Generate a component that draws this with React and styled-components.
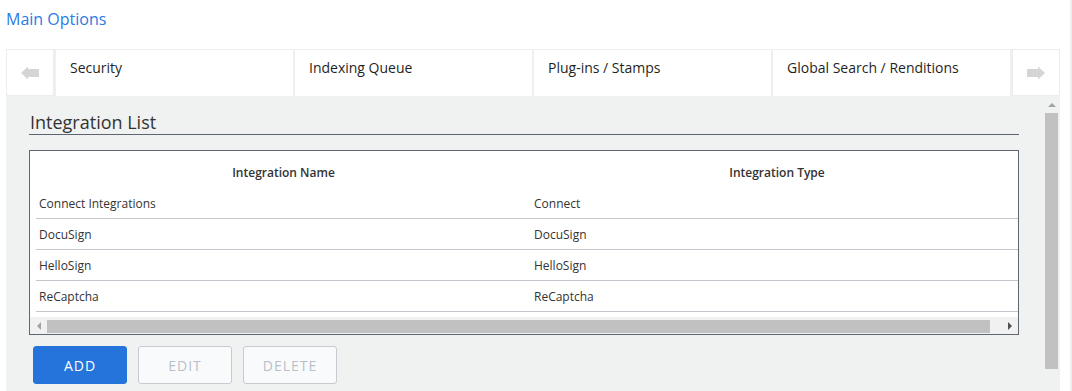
import React from "react";
import styled, { createGlobalStyle } from "styled-components";

const GlobalStyle = createGlobalStyle`
  html, body {
    margin: 0;
    padding: 0;
    background: #ffffff;
    overflow: hidden;
  }
  body {
    font-family: "Open Sans", "Liberation Sans", sans-serif;
  }
  * {
    box-sizing: border-box;
  }
`;

const integrations = [
  { name: "Connect Integrations", type: "Connect" },
  { name: "DocuSign", type: "DocuSign" },
  { name: "HelloSign", type: "HelloSign" },
  { name: "ReCaptcha", type: "ReCaptcha" },
];

const tabs = ["Security", "Indexing Queue", "Plug-ins / Stamps", "Global Search / Renditions"];

const Arrow = ({ flip }) => (
  <svg width="18" height="14" viewBox="0 0 18 14" style={flip ? { transform: "scaleX(-1)" } : null}>
    <path d="M0 7 L7 0.5 L7 3 L18 3 L18 11 L7 11 L7 13.5 Z" fill="#d5d5d5" />
  </svg>
);

const App = () => {
  return (
    <>
      <GlobalStyle />
      <Page>
        <Title>Main Options</Title>
        <TabBar>
          <ArrowBox>
            <Arrow />
          </ArrowBox>
          <Tabs>
            {tabs.map((tab) => (
              <Tab key={tab}>{tab}</Tab>
            ))}
          </Tabs>
          <ArrowBox>
            <Arrow flip />
          </ArrowBox>
        </TabBar>
        <Panel>
          <Content>
            <SectionTitle>Integration List</SectionTitle>
            <TableBox>
              <TableView>
                <HeaderRow>
                  <HeadCell>Integration Name</HeadCell>
                  <HeadCell>Integration Type</HeadCell>
                </HeaderRow>
                {integrations.map((item) => (
                  <Row key={item.name}>
                    <Cell>{item.name}</Cell>
                    <Cell>{item.type}</Cell>
                  </Row>
                ))}
              </TableView>
              <HScroll>
                <ScrollButton>
                  <Triangle dir="left" $color="#a3a3a3" />
                </ScrollButton>
                <HThumb />
                <HGap />
                <ScrollButton>
                  <Triangle dir="right" $color="#505050" />
                </ScrollButton>
              </HScroll>
            </TableBox>
            <Buttons>
              <Button $primary>ADD</Button>
              <Button disabled>EDIT</Button>
              <Button disabled>DELETE</Button>
            </Buttons>
          </Content>
          <VScroll>
            <ScrollButton>
              <Triangle dir="up" $color="#a3a3a3" />
            </ScrollButton>
            <VThumb />
          </VScroll>
        </Panel>
      </Page>
    </>
  );
};

const Page = styled.div`
  width: 1072px;
  height: 391px;
  padding: 8px 10px 0 6px;
  border-right: 2px solid #efefef;
  overflow: hidden;
`;

const Title = styled.div`
  font-size: 16px;
  line-height: 22px;
  color: #2b7be4;
  margin-bottom: 19px;
`;

const TabBar = styled.div`
  display: flex;
  align-items: flex-start;
`;

const ArrowBox = styled.div`
  width: 48px;
  height: 47px;
  flex-shrink: 0;
  border: 1px solid #ececec;
  display: flex;
  align-items: center;
  justify-content: center;
  background: #ffffff;
`;

const Tabs = styled.div`
  flex: 1;
  min-width: 0;
  display: flex;
  border-top: 1px solid #f0f0f0;
  border-right: 2px solid #efefef;
`;

const Tab = styled.div`
  flex: 1;
  min-width: 0;
  height: 46px;
  padding: 8px 0 0 14px;
  border-left: 2px solid #efefef;
  font-size: 14px;
  line-height: 20px;
  color: #1f1f1f;
  background: #ffffff;
  white-space: nowrap;
  overflow: hidden;
`;

const Panel = styled.div`
  display: flex;
  background: #f0f1f1;
  height: 300px;
`;

const Content = styled.div`
  flex: 1;
  min-width: 0;
  padding: 14px 24px 0 23px;
`;

const SectionTitle = styled.div`
  font-size: 18px;
  line-height: 24px;
  color: #333333;
  padding-left: 1px;
  border-bottom: 1px solid #5d6571;
  margin-bottom: 15px;
`;

const TableBox = styled.div`
  border: 1px solid #5f6670;
  background: #ffffff;
  overflow: hidden;
`;

const TableView = styled.div`
  width: 994px;
  margin-left: 6px;
  padding-bottom: 5px;
`;

const HeaderRow = styled.div`
  display: grid;
  grid-template-columns: 495px 492px;
  padding: 14px 0 7px;
`;

const HeadCell = styled.div`
  font-size: 12px;
  line-height: 16px;
  font-weight: 600;
  color: #333333;
  text-align: center;
`;

const Row = styled.div`
  display: grid;
  grid-template-columns: 495px 492px;
  height: 31px;
  align-items: center;
  border-bottom: 1px solid #c3c7cd;
`;

const Cell = styled.div`
  font-size: 12px;
  line-height: 16px;
  color: #333333;
  padding-left: 3px;
  padding-top: 1px;
`;

const HScroll = styled.div`
  display: flex;
  height: 17px;
  background: #f1f1f1;
`;

const ScrollButton = styled.div`
  width: 17px;
  height: 17px;
  flex-shrink: 0;
  display: flex;
  align-items: center;
  justify-content: center;
`;

const Triangle = styled.div`
  width: 0;
  height: 0;
  border-style: solid;
  border-color: transparent;
  ${({ dir, $color }) =>
    dir === "left"
      ? `border-width: 4px 4px 4px 0; border-right-color: ${$color};`
      : dir === "right"
      ? `border-width: 4px 0 4px 4px; border-left-color: ${$color};`
      : `border-width: 0 4px 4px 4px; border-bottom-color: ${$color};`}
`;

const HThumb = styled.div`
  width: 943px;
  flex-shrink: 0;
  margin: 3px 0 1px;
  background: #c1c1c1;
`;

const HGap = styled.div`
  flex: 1;
`;

const Buttons = styled.div`
  display: flex;
  gap: 11px;
  margin: 11px 0 0 4px;
`;

const Button = styled.button`
  width: 94px;
  height: 38px;
  border-radius: 3px;
  font-family: "Open Sans", "Liberation Sans", sans-serif;
  font-size: 14px;
  letter-spacing: 1px;
  border: 1px solid ${({ $primary }) => ($primary ? "#2574db" : "#c6cbd2")};
  background: ${({ $primary }) => ($primary ? "#2574db" : "#f9fafb")};
  color: ${({ $primary }) => ($primary ? "#ffffff" : "#b9bfc8")};
  padding: 0;
`;

const VScroll = styled.div`
  width: 17px;
  flex-shrink: 0;
  display: flex;
  flex-direction: column;
  align-items: center;
`;

const VThumb = styled.div`
  width: 13px;
  height: 256px;
  flex-shrink: 0;
  background: #c1c1c1;
`;

export default App;
